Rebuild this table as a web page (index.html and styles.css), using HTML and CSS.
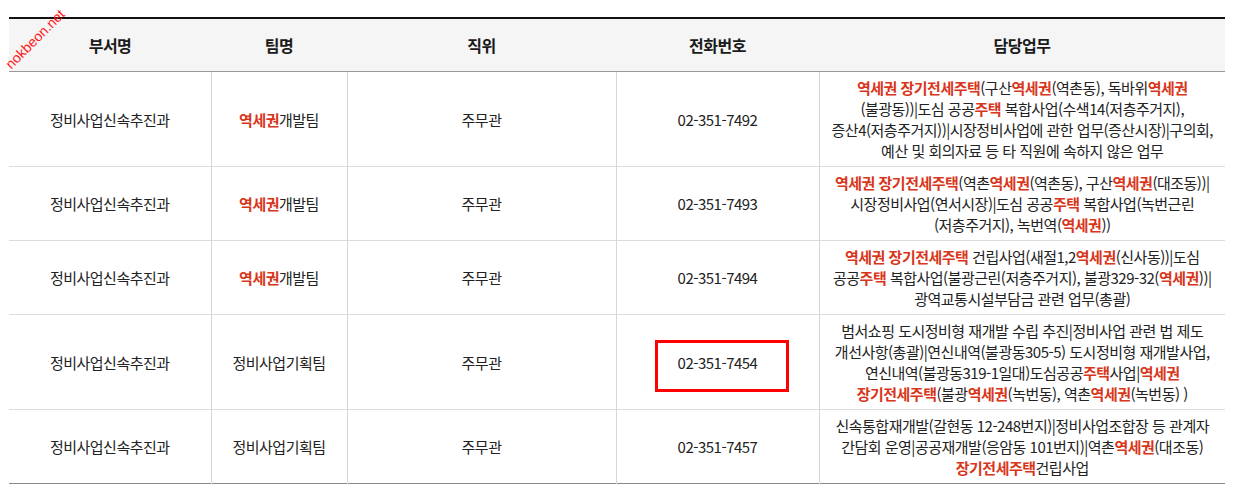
FILE: index.html
```html
<!DOCTYPE html>
<html lang="ko">
<head>
<meta charset="utf-8">
<title>부서 직원 안내</title>
<link rel="stylesheet" href="styles.css">
</head>
<body>
<div class="page">
  <span class="watermark">nokbeon.net</span>
  <table class="staff">
    <colgroup>
      <col class="c1"><col class="c2"><col class="c3"><col class="c4"><col class="c5">
    </colgroup>
    <thead>
      <tr><th>부서명</th><th>팀명</th><th>직위</th><th>전화번호</th><th>담당업무</th></tr>
    </thead>
    <tbody>
      <tr>
        <td>정비사업신속추진과</td>
        <td><b class="hl">역세권</b>개발팀</td>
        <td>주무관</td>
        <td class="tel">02-351-7492</td>
        <td class="duty"><b class="hl">역세권 장기전세주택</b>(구산<b class="hl">역세권</b>(역촌동), 독바위<b class="hl">역세권</b><br>(불광동))|도심 공공<b class="hl">주택</b> 복합사업(수색14(저층주거지),<br>증산4(저층주거지))|시장정비사업에 관한 업무(증산시장)|구의회,<br>예산 및 회의자료 등 타 직원에 속하지 않은 업무</td>
      </tr>
      <tr>
        <td>정비사업신속추진과</td>
        <td><b class="hl">역세권</b>개발팀</td>
        <td>주무관</td>
        <td class="tel">02-351-7493</td>
        <td class="duty"><b class="hl">역세권 장기전세주택</b>(역촌<b class="hl">역세권</b>(역촌동), 구산<b class="hl">역세권</b>(대조동))|<br>시장정비사업(연서시장)|도심 공공<b class="hl">주택</b> 복합사업(녹번근린<br>(저층주거지), 녹번역(<b class="hl">역세권</b>))</td>
      </tr>
      <tr>
        <td>정비사업신속추진과</td>
        <td><b class="hl">역세권</b>개발팀</td>
        <td>주무관</td>
        <td class="tel">02-351-7494</td>
        <td class="duty"><b class="hl">역세권 장기전세주택</b> 건립사업(새절1,2<b class="hl">역세권</b>(신사동))|도심<br>공공<b class="hl">주택</b> 복합사업(불광근린(저층주거지), 불광329-32(<b class="hl">역세권</b>))|<br>광역교통시설부담금 관련 업무(총괄)</td>
      </tr>
      <tr>
        <td>정비사업신속추진과</td>
        <td>정비사업기획팀</td>
        <td>주무관</td>
        <td class="tel"><span class="marked">02-351-7454</span></td>
        <td class="duty">범서쇼핑 도시정비형 재개발 수립 추진|정비사업 관련 법 제도<br>개선사항(총괄)|연신내역(불광동305-5) 도시정비형 재개발사업,<br>연신내역(불광동319-1일대)도심공공<b class="hl">주택</b>사업|<b class="hl">역세권<br>장기전세주택</b>(불광<b class="hl">역세권</b>(녹번동), 역촌<b class="hl">역세권</b>(녹번동) )</td>
      </tr>
      <tr>
        <td>정비사업신속추진과</td>
        <td>정비사업기획팀</td>
        <td>주무관</td>
        <td class="tel">02-351-7457</td>
        <td class="duty">신속통합재개발(갈현동 12-248번지)|정비사업조합장 등 관계자<br>간담회 운영|공공재개발(응암동 101번지)|역촌<b class="hl">역세권</b>(대조동)<br><b class="hl">장기전세주택</b>건립사업</td>
      </tr>
    </tbody>
  </table>
</div>
</body>
</html>
```

FILE: styles.css
```css
html, body {
  margin: 0;
  padding: 0;
  background: #fff;
}

.page {
  position: relative;
  padding: 17px 16px 0 9px;
  font-family: "Noto Sans CJK KR", "Noto Sans", sans-serif;
  font-size: 15px;
  letter-spacing: -0.5px;
  color: #222;
}

.watermark {
  position: absolute;
  left: -4px;
  top: 30px;
  width: 80px;
  font-family: "Liberation Sans", Arial, sans-serif;
  font-size: 14px;
  line-height: 16px;
  letter-spacing: 0;
  color: #ff1a1a;
  white-space: nowrap;
  transform: rotate(-45deg);
  transform-origin: 50% 50%;
  z-index: 2;
}

.staff {
  width: 1216px;
  border-collapse: collapse;
  table-layout: fixed;
  border-top: 2px solid #111;
  border-bottom: 1px solid #888;
}

.c1 { width: 202px; }
.c2 { width: 136px; }
.c3 { width: 269px; }
.c4 { width: 203px; }
.c5 { width: 406px; }

.staff th {
  height: 52px;
  padding: 0;
  background: #f5f5f5;
  border-bottom: 1px solid #999;
  font-size: 16px;
  font-weight: 700;
  color: #1a1a1a;
  text-align: center;
  vertical-align: middle;
  line-height: 21px;
}

.staff td {
  padding: 5px 0;
  border-top: 1px solid #dcdcdc;
  border-left: 1px solid #d6d6d6;
  text-align: center;
  vertical-align: middle;
  line-height: 21px;
  color: #222;
}

.staff tbody tr:first-child td {
  border-top: 1px solid #999;
}

.staff td:first-child {
  border-left: none;
}

.staff td.duty {
  white-space: nowrap;
}

.hl {
  color: #d8361b;
  font-weight: 700;
}

.marked {
  position: relative;
  display: inline-block;
}

.marked::after {
  content: "";
  position: absolute;
  left: -23px;
  top: -12px;
  width: 134px;
  height: 52px;
  box-sizing: border-box;
  border: 3px solid #ff0000;
}
```
